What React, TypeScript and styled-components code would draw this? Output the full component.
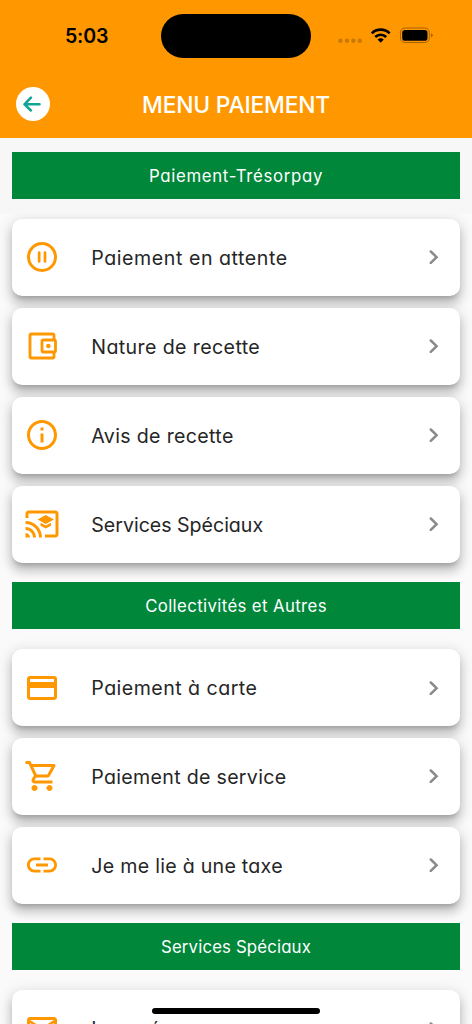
import React from "react";
import styled, { createGlobalStyle } from "styled-components";
import {
  MdCreditCard,
  MdInfoOutline,
  MdInsertLink,
  MdMailOutline,
  MdOutlineCastForEducation,
  MdOutlineShoppingCart,
} from "react-icons/md";

const GlobalStyle = createGlobalStyle`
  * { box-sizing: border-box; }
  body {
    margin: 0;
    background: #fafafa;
    font-family: Inter, "Liberation Sans", sans-serif;
    font-feature-settings: "cv11";
  }
`;

const Screen = styled.div`
  position: relative;
  width: 472px;
  height: 1024px;
  overflow: hidden;
  background: #fafafa;
`;

const Header = styled.header`
  height: 138.3px;
  background: #ff9800;
`;

const StatusBar = styled.div`
  display: flex;
  justify-content: space-between;
  height: 72px;
  padding: 14px 39px 0 65px;
`;

const Clock = styled.time`
  width: 96px;
  font-size: 19.6px;
  line-height: 45px;
  font-weight: 600;
  letter-spacing: -0.2px;
  color: #000;
`;

const Island = styled.div`
  width: 150px;
  height: 44px;
  border-radius: 22px;
  background: #000;
`;

const StatusIcons = styled.svg`
  width: 96px;
  height: 20px;
  margin: 12px 0 0 26px;
`;

const TitleBar = styled.div`
  display: grid;
  grid-template-columns: 34px 1fr 34px;
  align-items: center;
  height: 64px;
  padding: 0 16px;
`;

const BackButton = styled.button`
  display: grid;
  place-items: center;
  width: 34px;
  height: 34px;
  padding: 0;
  border: 0;
  border-radius: 50%;
  background: #fff;
`;

const Title = styled.h1`
  margin: 0;
  font-size: 22.8px;
  font-weight: 500;
  text-align: center;
  letter-spacing: -0.2px;
  color: #fff;
`;

const BannerArea = styled.div<{ $top: number; $shaded?: boolean }>`
  position: relative;
  padding: ${(p) => p.$top}px 12.3px ${(p) => (p.$shaded ? 13.8 : 0)}px;
  margin-bottom: ${(p) => (p.$shaded ? 6 : 19.8)}px;
  background: ${(p) => (p.$shaded ? "#f7f7f7" : "transparent")};
`;

const Banner = styled.h2<{ $tracking: number }>`
  display: flex;
  align-items: center;
  justify-content: center;
  height: 47px;
  margin: 0;
  font-size: 16.8px;
  font-weight: 400;
  letter-spacing: ${(p) => p.$tracking}px;
  color: #fff;
  background: #00873a;
`;

const CardList = styled.div`
  display: flex;
  flex-direction: column;
  gap: 12px;
  padding: 0 12.3px;
`;

const Card = styled.div`
  display: flex;
  align-items: center;
  height: 76.9px;
  padding: 0 21px 0 12px;
  border-radius: 10px;
  background: #fff;
  box-shadow:
    0 5px 5px -3px rgba(0, 0, 0, 0.2),
    0 8px 10px 1px rgba(0, 0, 0, 0.14),
    0 3px 14px 2px rgba(0, 0, 0, 0.12);
`;

const IconSlot = styled.span`
  display: flex;
  width: 67px;
  color: #ff9800;
`;

const Label = styled.span<{ $tracking: number }>`
  flex: 1;
  padding-top: 1.4px;
  font-size: 19.6px;
  font-weight: 400;
  white-space: nowrap;
  letter-spacing: ${(p) => p.$tracking}px;
  color: #262626;
`;

const HomeIndicator = styled.div`
  position: absolute;
  left: 152px;
  top: 1008px;
  width: 168px;
  height: 6px;
  border-radius: 3px;
  background: #000;
`;

interface IconProps {
  size?: number;
}

const PauseIcon = ({ size = 24 }: IconProps) => (
  <svg width={size} height={size} viewBox="0 0 24 24" fill="none" stroke="currentColor" strokeWidth="2">
    <circle cx="12" cy="12" r="9" />
    <path d="M10.1 9v6M14 9v6" strokeWidth="1.8" strokeLinecap="round" />
  </svg>
);

const WalletIcon = ({ size = 24 }: IconProps) => (
  <svg width={size} height={size} viewBox="0 0 24 24" fill="none" stroke="currentColor" strokeWidth="1.9">
    <path d="M20 7.5V5a1 1 0 0 0-1-1H5a1 1 0 0 0-1 1v14a1 1 0 0 0 1 1h14a1 1 0 0 0 1-1v-2.5" />
    <rect x="12" y="8" width="9" height="8" rx="1" />
    <circle cx="16.2" cy="12" r="1.5" fill="currentColor" stroke="none" />
  </svg>
);

interface Item {
  label: string;
  icon: React.ComponentType<IconProps>;
  tracking: number;
}

interface Group {
  title: string;
  tracking: number;
  top: number;
  items: Item[];
}

const groups: Group[] = [
  {
    title: "Paiement-Trésorpay",
    tracking: 0.67,
    top: 13.9,
    items: [
      { label: "Paiement en attente", icon: PauseIcon, tracking: 0.55 },
      { label: "Nature de recette", icon: WalletIcon, tracking: 0.38 },
      { label: "Avis de recette", icon: MdInfoOutline, tracking: 0.33 },
      { label: "Services Spéciaux", icon: MdOutlineCastForEducation, tracking: -0.02 },
    ],
  },
  {
    title: "Collectivités et Autres",
    tracking: 0.37,
    top: 19.8,
    items: [
      { label: "Paiement à carte", icon: MdCreditCard, tracking: 0.46 },
      { label: "Paiement de service", icon: MdOutlineShoppingCart, tracking: 0.3 },
      { label: "Je me lie à une taxe", icon: MdInsertLink, tracking: 0.27 },
    ],
  },
  {
    title: "Services Spéciaux",
    tracking: 0.15,
    top: 19.6,
    items: [{ label: "Impayés", icon: MdMailOutline, tracking: 0.2 }],
  },
];

const Chevron = () => (
  <svg width="10" height="14" viewBox="0 0 10 14" fill="none">
    <path d="M1.8 1.5 7.6 7.2 1.8 12.9" stroke="#8a8a8a" strokeWidth="2.5" strokeLinecap="round" />
  </svg>
);

export default function App() {
  return (
    <Screen>
      <GlobalStyle />
      <Header>
        <StatusBar>
          <Clock>5:03</Clock>
          <Island />
          <StatusIcons viewBox="337 26 96 20">
            <g fill="#c97800">
              <circle cx="340.4" cy="40.8" r="2.2" />
              <circle cx="347" cy="40.8" r="2.2" />
              <circle cx="353.4" cy="40.8" r="2.2" />
              <circle cx="359.8" cy="40.8" r="2.2" />
            </g>
            <g fill="none" stroke="#000" strokeWidth="2.7">
              <path d="M371.8 33.4a12.6 12.6 0 0 1 17.8 0" />
              <path d="M375.2 37a7.8 7.8 0 0 1 11 0" />
            </g>
            <path d="M377.6 39.6a4.5 4.5 0 0 1 6.2 0l-3.1 3.1z" fill="#000" />
            <rect x="400.5" y="28" width="28.8" height="14.5" rx="4.4" fill="none" stroke="#a56300" />
            <rect x="402.2" y="30" width="25.3" height="10.7" rx="2.8" fill="#000" />
            <path d="M431 33.1q1.7.7 1.7 2.2t-1.7 2.2z" fill="#a56300" />
          </StatusIcons>
        </StatusBar>
        <TitleBar>
          <BackButton aria-label="Retour">
            <svg width="20" height="16" viewBox="0 0 20 16" fill="none" stroke="#0fa594" strokeWidth="2.5" strokeLinecap="round" strokeLinejoin="round">
              <path d="M16.5 8.3H1.5M7.9 1.7 1.5 8.3l6.4 6.2" />
            </svg>
          </BackButton>
          <Title>MENU PAIEMENT</Title>
        </TitleBar>
      </Header>
      {groups.map((group, index) => (
        <section key={group.title}>
          <BannerArea $top={group.top} $shaded={index === 0}>
            <Banner $tracking={group.tracking}>{group.title}</Banner>
          </BannerArea>
          <CardList>
            {group.items.map(({ label, icon: Icon, tracking }) => (
              <Card key={label}>
                <IconSlot>
                  <Icon size={36} />
                </IconSlot>
                <Label $tracking={tracking}>{label}</Label>
                <Chevron />
              </Card>
            ))}
          </CardList>
        </section>
      ))}
      <HomeIndicator />
    </Screen>
  );
}
